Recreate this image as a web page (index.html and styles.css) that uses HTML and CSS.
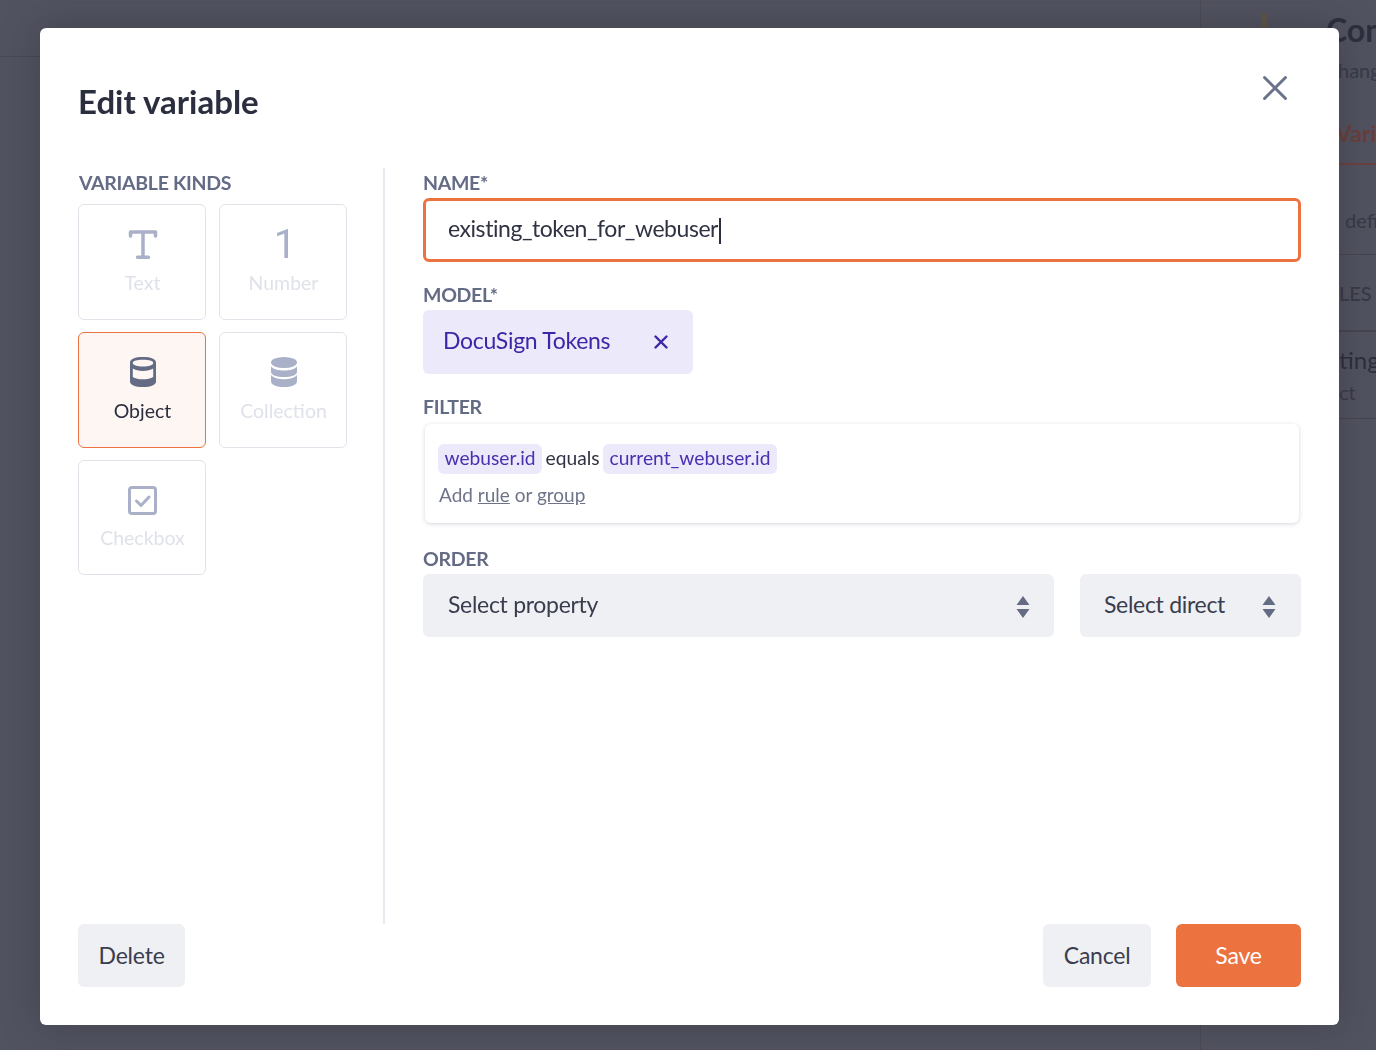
FILE: index.html
```html
<!DOCTYPE html>
<html>
	<head>
		<title>Edit variable</title>
		<meta charset="UTF-8">
		<meta name="viewport" content="width=device-width, initial-scale=1.0">
		<link rel="stylesheet" href="styles.css">
	</head>
	<body>

		<!-- page behind the modal -->
		<div class="page">
			<div class="page-top"></div>
			<div class="side">
				<span class="side-mark"></span>
				<div class="side-title">Con</div>
				<div class="side-sub">hang</div>
				<div class="side-tab">Varia</div>
				<div class="side-row">defi</div>
				<div class="side-row side-head">LES</div>
				<div class="side-item">
					<div class="side-item-name">ting</div>
					<div class="side-item-sub">ct</div>
				</div>
			</div>
		</div>

		<div class="overlay">
			<div class="modal">
				<div class="modal-head">
					<h2 class="modal-title">Edit variable</h2>
					<button class="close-btn">
						<svg width="26" height="26" viewBox="0 0 26 26"><path d="M2.500 2.500 L23.500 23.500 M23.500 2.500 L2.500 23.500" stroke="#6b7189" stroke-width="3" stroke-linecap="round"/></svg>
					</button>
				</div>

				<div class="modal-body">
					<div class="kinds">
						<div class="label">VARIABLE KINDS</div>
						<div class="kind-grid">
							<div class="kind">
								<svg class="kind-icon" width="32" height="32" viewBox="0 0 32 32"><path d="M3.500 8 V4 H28.500 V8 M16 4 V29.300 M10.500 29.300 H21.500" fill="none" stroke="#a9b0c8" stroke-width="3.500" stroke-linecap="round" stroke-linejoin="round"/></svg>
								<span>Text</span>
							</div>
							<div class="kind">
								<span class="kind-num">1</span>
								<span>Number</span>
							</div>
							<div class="kind kind-active">
								<svg class="kind-icon" width="32" height="32" viewBox="0 0 32 32"><path d="M16 1 C8 1 3 3 3 6.500 V25.500 C3 29 8 31 16 31 C24 31 29 29 29 25.500 V6.500 C29 3 24 1 16 1 Z M5.800 7 C5.800 5 10 3.800 16 3.800 C22 3.800 26.200 5 26.200 7 C26.200 9 22 10.500 16 10.500 C10 10.500 5.800 9 5.800 7 Z M5.800 12.500 C8 14 12 15 16 15 C20 15 24 14 26.200 12.500 V21 C24 22.500 20 23.300 16 23.300 C12 23.300 8 22.500 5.800 21 Z" fill="#646b85" fill-rule="evenodd"/></svg>
								<span>Object</span>
							</div>
							<div class="kind">
								<svg class="kind-icon" width="32" height="32" viewBox="0 0 32 32"><ellipse cx="16" cy="6.500" rx="13" ry="5.500" fill="#a9b0c8"/><path d="M3 10.500 C5.500 13.500 11 14.500 16 14.500 C21 14.500 26.500 13.500 29 10.500 V16 C29 19 23 21 16 21 C9 21 3 19 3 16 Z M3 19 C5.500 22 11 23.200 16 23.200 C21 23.200 26.500 22 29 19 V25 C29 29 23 31 16 31 C9 31 3 29 3 25 Z" fill="#a9b0c8"/></svg>
								<span>Collection</span>
							</div>
							<div class="kind">
								<svg class="kind-icon" width="32" height="32" viewBox="0 0 32 32"><rect x="2.500" y="3.500" width="26" height="26" rx="2.500" fill="none" stroke="#a9b0c8" stroke-width="3"/><path d="M9.500 17 L14 21.500 L22 13" fill="none" stroke="#a9b0c8" stroke-width="3" stroke-linecap="round" stroke-linejoin="round"/></svg>
								<span>Checkbox</span>
							</div>
						</div>
					</div>

					<div class="fields">
						<div class="label">NAME*</div>
						<div class="name-input">existing_token_for_webuser<span class="caret"></span></div>

						<div class="label label-gap">MODEL*</div>
						<div class="model-chip">
							<span>DocuSign Tokens</span>
							<svg class="chip-close" width="14" height="14" viewBox="0 0 14 14"><path d="M1.500 1.500 L12.500 12.500 M12.500 1.500 L1.500 12.500" stroke="#3e26a6" stroke-width="2.400" stroke-linecap="round"/></svg>
						</div>

						<div class="label label-gap">FILTER</div>
						<div class="filter-box">
							<div class="filter-rule">
								<span class="chip">webuser.id</span>
								<span>equals</span>
								<span class="chip">current_webuser.id</span>
							</div>
							<div class="filter-add">Add <u>rule</u> or <u>group</u></div>
						</div>

						<div class="label label-order">ORDER</div>
						<div class="order-row">
							<div class="select select-property">
								<span>Select property</span>
								<svg class="sort-icon" width="14" height="22" viewBox="0 0 14 22"><path d="M7 0 L13.500 9 H0.500 Z M0.500 13 H13.500 L7 22 Z" fill="#646b85"/></svg>
							</div>
							<div class="select select-direction">
								<span>Select direct</span>
								<svg class="sort-icon" width="14" height="22" viewBox="0 0 14 22"><path d="M7 0 L13.500 9 H0.500 Z M0.500 13 H13.500 L7 22 Z" fill="#646b85"/></svg>
							</div>
						</div>
					</div>
				</div>

				<div class="modal-foot">
					<button class="btn">Delete</button>
					<div class="foot-right">
						<button class="btn">Cancel</button>
						<button class="btn btn-save">Save</button>
					</div>
				</div>
			</div>
		</div>
	</body>
</html>
```

FILE: styles.css
```css
* {
	margin: 0;
	padding: 0;
	box-sizing: border-box;
}

html,
body {
	height: 100%;
	overflow: hidden;
}

body {
	font-family: Lato, "Open Sans", sans-serif;
	background-color: #525360;
	color: #2b2e3f;
}

/* page behind the modal */
.page {
	height: 100%;
	display: flex;
	justify-content: flex-end;
}

.page-top {
	flex: 1;
	height: 57px;
	border-bottom: 1px solid #484954;
}

.side {
	position: relative;
	width: 176px;
	border-left: 1px solid #4a4b57;
	overflow: hidden;
	white-space: nowrap;
}

.side-mark {
	position: absolute;
	left: 60px;
	top: 13px;
	width: 6px;
	height: 20px;
	border-radius: 3px;
	background-color: #5f5548;
}

.side-title {
	height: 54px;
	padding: 10px 0 0 125px;
	font-size: 32px;
	line-height: 40px;
	font-weight: 700;
	color: #2d2f3e;
}

.side-sub {
	height: 34px;
	padding-left: 137px;
	font-size: 20px;
	line-height: 32px;
	color: #383a48;
}

.side-tab {
	height: 77px;
	padding: 30px 0 0 135px;
	border-bottom: 2px solid #6a4240;
	font-size: 23px;
	line-height: 30px;
	font-weight: 700;
	color: #6a3f3c;
}

.side-row {
	height: 90px;
	padding-left: 144px;
	border-bottom: 1px solid #454652;
	font-size: 20px;
	line-height: 110px;
	color: #383a48;
}

.side-head {
	height: 77px;
	padding-left: 138px;
	border-bottom: 2px solid #454652;
	line-height: 76px;
	font-weight: 500;
}

.side-item {
	height: 87px;
	padding: 13px 0 0 138px;
	border-bottom: 1px solid #454652;
}

.side-item-name {
	font-size: 24px;
	line-height: 30px;
	color: #2d2f3e;
}

.side-item-sub {
	margin-top: 5px;
	font-size: 20px;
	line-height: 24px;
	color: #383a48;
}

/* modal */
.overlay {
	position: fixed;
	left: 0;
	top: 0;
	width: 100%;
	height: 100%;
	padding: 28px 37px 25px 40px;
}

.modal {
	height: 100%;
	display: flex;
	flex-direction: column;
	padding: 0 38px;
	border-radius: 6px;
	background-color: #fff;
	box-shadow: 0 0 40px rgba(30, 30, 40, 0.3);
}

.modal-head {
	height: 140px;
	flex: none;
	display: flex;
	justify-content: space-between;
	align-items: flex-start;
}

.modal-title {
	margin-top: 53px;
	font-size: 33px;
	line-height: 40px;
	font-weight: 700;
	color: #2b2e3f;
}

.close-btn {
	margin: 47px 13px 0 0;
	border: none;
	background: none;
	line-height: 0;
}

.modal-body {
	flex: 1;
	display: flex;
}

.label {
	height: 30px;
	font-size: 19.5px;
	line-height: 30px;
	font-weight: 700;
	color: #646b85;
	letter-spacing: -0.3px;
}

.kinds .label {
	padding-left: 1px;
}

.label-gap {
	margin-top: 18px;
}

.label-order {
	margin-top: 21px;
}

/* left column */
.kinds {
	width: 307px;
	flex: none;
	border-right: 2px solid #e9e9ef;
}

.kind-grid {
	display: grid;
	grid-template-columns: 128px 128px;
	grid-template-rows: 116px 116px 115px;
	gap: 12px 13px;
	margin-top: 6px;
}

.kind {
	display: flex;
	flex-direction: column;
	align-items: center;
	border: 1px solid #e2e3ea;
	border-radius: 6px;
	padding: 23px 0 0 1px;
	font-size: 19.5px;
	line-height: 26px;
	color: #e0e2ea;
}

.kind-icon {
	margin-bottom: 10px;
}

.kind:last-child .kind-icon {
	margin-bottom: 9px;
}

.kind-num {
	height: 32px;
	margin: 0 0 10px 3px;
	font-family: Roboto, sans-serif;
	font-size: 40px;
	line-height: 34px;
	color: #a9b0c8;
}

.kind-active {
	border-color: #ec7340;
	background-color: #fef6f3;
	color: #2b2e3f;
}

/* right column */
.fields {
	flex: 1;
	padding-left: 38px;
}

.name-input {
	height: 64px;
	padding-left: 22px;
	border: 3px solid #ec7340;
	border-radius: 6px;
	font-size: 23px;
	letter-spacing: -0.45px;
	line-height: 55px;
	color: #2f3242;
}

.caret {
	display: inline-block;
	width: 2px;
	height: 26px;
	margin-left: 1px;
	vertical-align: -7px;
	background-color: #2b2e3f;
}

.model-chip {
	width: 270px;
	height: 64px;
	display: flex;
	align-items: center;
	justify-content: space-between;
	padding: 0 25px 4px 20px;
	border-radius: 6px;
	background-color: #ece9fa;
	font-size: 23px;
	letter-spacing: -0.3px;
	color: #3e26a6;
}

.chip-close {
	margin-top: 4px;
}

.filter-box {
	height: 99px;
	margin: 2px 2px 0;
	padding: 20px 13px 0;
	border-radius: 6px;
	background-color: #fff;
	box-shadow: 0 1px 4px rgba(70, 75, 110, 0.22);
	font-size: 19.2px;
}

.filter-rule {
	display: flex;
	align-items: flex-start;
	gap: 3.5px;
	height: 30px;
	line-height: 28px;
	color: #2f3242;
}

.chip {
	height: 30px;
	padding: 0 6.5px;
	border-radius: 6px;
	background-color: #ece9fa;
	color: #4a2fb0;
}

.filter-add {
	margin-top: 7px;
	padding-left: 1px;
	font-size: 19px;
	line-height: 28px;
	color: #6f7389;
}

.order-row {
	display: flex;
	gap: 26px;
}

.select {
	height: 63px;
	display: flex;
	align-items: center;
	justify-content: space-between;
	padding: 0 24px 4px 25px;
	border-radius: 6px;
	background-color: #eff0f4;
	font-size: 23px;
	letter-spacing: -0.3px;
	color: #3a3d4d;
}

.sort-icon {
	margin-top: 6px;
}

.select-property {
	flex: 1;
}

.select-direction {
	width: 221px;
	flex: none;
	padding: 0 25px 4px 24px;
}

/* footer */
.modal-foot {
	height: 101px;
	flex: none;
	display: flex;
	justify-content: space-between;
	align-items: flex-start;
}

.foot-right {
	display: flex;
	gap: 25px;
}

.btn {
	height: 63px;
	padding: 0 20.5px 2px;
	border: none;
	border-radius: 6px;
	background-color: #eff0f4;
	font-family: inherit;
	font-size: 23px;
	letter-spacing: -0.2px;
	color: #3a3d4d;
}

.btn-save {
	width: 125px;
	background-color: #ec7340;
	color: #fff;
}
```
